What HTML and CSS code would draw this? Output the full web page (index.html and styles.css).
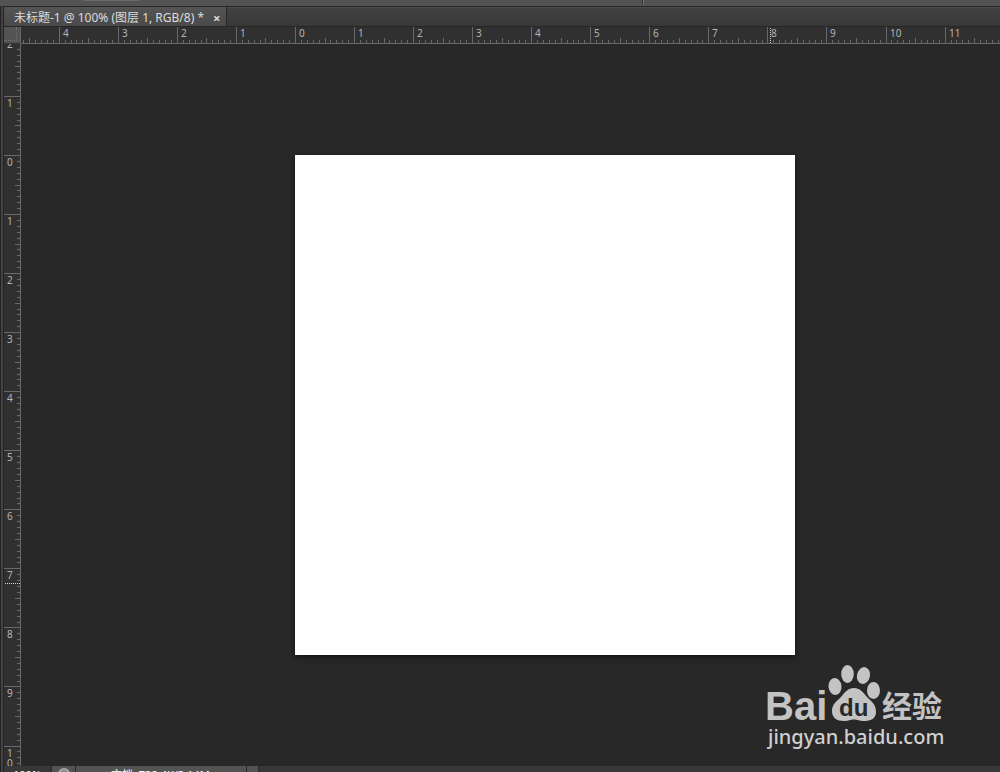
FILE: index.html
```
<!DOCTYPE html>
<html lang="zh-CN">
<head>
    <meta charset="UTF-8">
    <meta name="viewport" content="width=device-width, initial-scale=1.0">
    <title>未标题-1</title>
    <link rel="stylesheet" href="styles.css">
</head>
<body>

<div class="options-bar">
    <span class="option-field"></span>
    <span class="divider"></span>
</div>

<div class="window">
    <div class="tab-bar">
        <div class="tab">
            <span>未标题-1 @ 100% (图层 1, RGB/8) *</span>
            <button type="button" class="tab-close" aria-label="关闭">×</button>
        </div>
    </div>

    <div class="editor">
        <div class="corner"></div>
        <svg id="ruler-x" class="ruler ruler-x"></svg>
        <svg id="ruler-y" class="ruler ruler-y"></svg>
        <main class="workspace">
            <div class="page"></div>
        </main>
    </div>

    <footer class="status-bar">
        <span class="zoom-level">100%</span>
        <span class="status-icon"><i></i></span>
        <span class="doc-size">文档: 732.4K/3.14M</span>
        <button type="button" class="status-menu" aria-label="菜单">▶</button>
    </footer>
</div>

<!-- Watermark -->
<svg class="watermark" width="190" height="100" viewBox="0 0 190 100">
    <g fill="#c3c3c3">
        <text class="brand" x="4" y="49">Bai</text>
        <ellipse cx="74" cy="15.5" rx="6.5" ry="8.5" transform="rotate(-6 74 15.5)"/>
        <ellipse cx="86.5" cy="3" rx="6.3" ry="9"/>
        <ellipse cx="102.500" cy="4.500" rx="6.500" ry="8.500" transform="rotate(12 102.500 4.500)"/>
        <ellipse cx="112.500" cy="19.500" rx="6.500" ry="8.500"/>
        <path d="M93 17C99 17 102 21 106 26C110 30 115 33 115 41C115 48 109 50 103 50C98 50 97 48.500 93 48.500C89 48.500 88 50 83 50C76 50 71 47 71 40C71 33 76 30 80 26C84 21 87 17 93 17Z"/>
        <text class="brand-cn" x="121" y="46">经验</text>
        <text class="site" x="7" y="73">jingyan.baidu.com</text>
    </g>
    <text class="brand-du" x="78" y="45">du</text>
</svg>

<script>
    // One centimetre at 100% zoom
    const CM = 59.055;
    const SVG_NS = 'http://www.w3.org/2000/svg';

    function add(parent, tag, attrs, text) {
        const el = document.createElementNS(SVG_NS, tag);
        for (const key in attrs) el.setAttribute(key, attrs[key]);
        if (text) el.textContent = text;
        parent.appendChild(el);
    }

    function drawRuler(id, origin, vertical, cursor) {
        const svg = document.getElementById(id);
        svg.replaceChildren();
        const length = vertical ? svg.clientHeight : svg.clientWidth;
        const first = Math.floor(-origin / CM) * 10;
        const last = Math.floor((length - origin) / CM * 10);

        for (let i = first; i <= last; i++) {
            const pos = Math.round(origin + i * CM / 10);
            // labels just before the edge still show partly
            if (pos < -10) continue;
            const size = i % 10 === 0 ? 16 : i % 5 === 0 ? 5 : 3;
            if (vertical) {
                add(svg, 'rect', { x: 16 - size, y: pos, width: size, height: 1 });
            } else {
                add(svg, 'rect', { x: pos, y: 16 - size, width: 1, height: size });
            }
            if (i % 10 !== 0) continue;

            const label = String(Math.abs(i / 10));
            if (vertical) {
                [...label].forEach((digit, n) => {
                    add(svg, 'text', { x: 3, y: pos + 11 + n * 10 }, digit);
                });
            } else {
                add(svg, 'text', { x: pos + 4, y: 10 }, label);
            }
        }

        const line = vertical
            ? { x1: 1, x2: 16, y1: cursor + 0.5, y2: cursor + 0.5 }
            : { x1: cursor + 0.5, x2: cursor + 0.5, y1: 1, y2: 16 };
        add(svg, 'line', { class: 'cursor', ...line });
    }

    function drawRulers() {
        drawRuler('ruler-x', 274, false, 749);
        drawRuler('ruler-y', 111, true, 539);
    }

    drawRulers();
    window.addEventListener('resize', drawRulers);
</script>

</body>
</html>
```
FILE: styles.css
```
* {
    box-sizing: border-box;
}

body {
    margin: 0;
    height: 100vh;
    overflow: hidden;
    display: flex;
    flex-direction: column;
    background: #282828;
    font-family: "Noto Sans", "Noto Sans CJK SC", sans-serif;
    color: #dcdcdc;
}

button {
    margin: 0;
    padding: 0;
    border: none;
    background: none;
    color: inherit;
    font: inherit;
}

.options-bar {
    flex: none;
    display: flex;
    height: 6px;
    background: #535353;
}

.option-field {
    width: 56px;
    height: 1px;
    margin-left: 83px;
    background: #6a6a6a;
}

.divider {
    width: 2px;
    height: 5px;
    margin-left: 503px;
    border-left: 1px solid #333;
    border-right: 1px solid #777;
}

.window {
    flex: 1;
    min-height: 0;
    display: flex;
    flex-direction: column;
    border-left: 4px double #222;
    background: #434343;
}

.tab-bar {
    flex: none;
    display: flex;
    height: 21px;
    border-top: 1px solid #262626;
    border-bottom: 1px solid #262626;
    background: linear-gradient(#424242, #383838);
    box-shadow: inset 0 1px #4c4c4c;
}

.tab {
    display: flex;
    align-items: center;
    gap: 9px;
    padding: 2px 6px 0 10px;
    border-right: 1px solid #282828;
    background: linear-gradient(#545454, #4a4a4a);
    font-size: 12px;
    line-height: 18px;
    white-space: nowrap;
}

.tab-close {
    font-size: 13px;
    font-weight: bold;
    line-height: 16px;
}

.editor {
    flex: 1;
    min-height: 0;
    display: grid;
    grid-template-columns: 17px 1fr;
    grid-template-rows: 17px 1fr;
}

.corner {
    padding: 0 3px 3px 0;
    border-right: 1px solid #686868;
    border-bottom: 1px solid #353535;
    background: #535353;
}

.corner::before {
    content: "";
    display: block;
    height: 100%;
    border-right: 1px dotted #737373;
    border-bottom: 1px dotted #737373;
}

.ruler {
    display: block;
    width: 100%;
    height: 100%;
    min-height: 0;
    background: #303030;
    fill: #696969;
}

.ruler-x {
    border-bottom: 1px solid #696969;
}

.ruler-y {
    border-right: 1px solid #696969;
}

.ruler text {
    fill: #b4b4b4;
    font: 10px "Noto Sans", sans-serif;
}

.ruler .cursor {
    stroke: #d8d8d8;
    stroke-dasharray: 1 1;
}

.workspace {
    min-width: 0;
    overflow: hidden;
    padding: 111px 0 0 274px;
    background: #282828;
}

.page {
    width: 500px;
    height: 500px;
    background: #fff;
    box-shadow: 0 2px 6px rgba(0, 0, 0, 0.6);
}

.status-bar {
    flex: none;
    display: flex;
    height: 6px;
    overflow: hidden;
    background: #383838;
    color: #fff;
    font-size: 11px;
    line-height: 17px;
}

.status-bar > * {
    flex: none;
    height: 20px;
    border-right: 1px solid #2a2a2a;
}

.zoom-level {
    width: 48px;
    padding-left: 9px;
}

.status-icon {
    width: 24px;
    padding: 2px 6px;
    background: #535353;
}

.status-icon i {
    display: block;
    width: 12px;
    height: 12px;
    border: 2px solid #a8a8a8;
    border-radius: 50%;
    background: #888;
}

.doc-size {
    width: 171px;
    padding-left: 35px;
    background: #535353;
}

.status-menu {
    width: 12px;
    background: #535353;
    font-size: 7px;
}

.watermark {
    position: absolute;
    right: 49px;
    bottom: 1px;
    overflow: visible;
}

.brand {
    font: bold 40px "Liberation Sans", Arial, sans-serif;
}

.brand-du {
    fill: #282828;
    font: bold 24px "Liberation Sans", Arial, sans-serif;
}

.brand-cn {
    font: bold 30px "Noto Sans CJK SC", sans-serif;
}

.site {
    fill: #d0d0d0;
    font: 500 20px "Noto Sans", sans-serif;
}
```
